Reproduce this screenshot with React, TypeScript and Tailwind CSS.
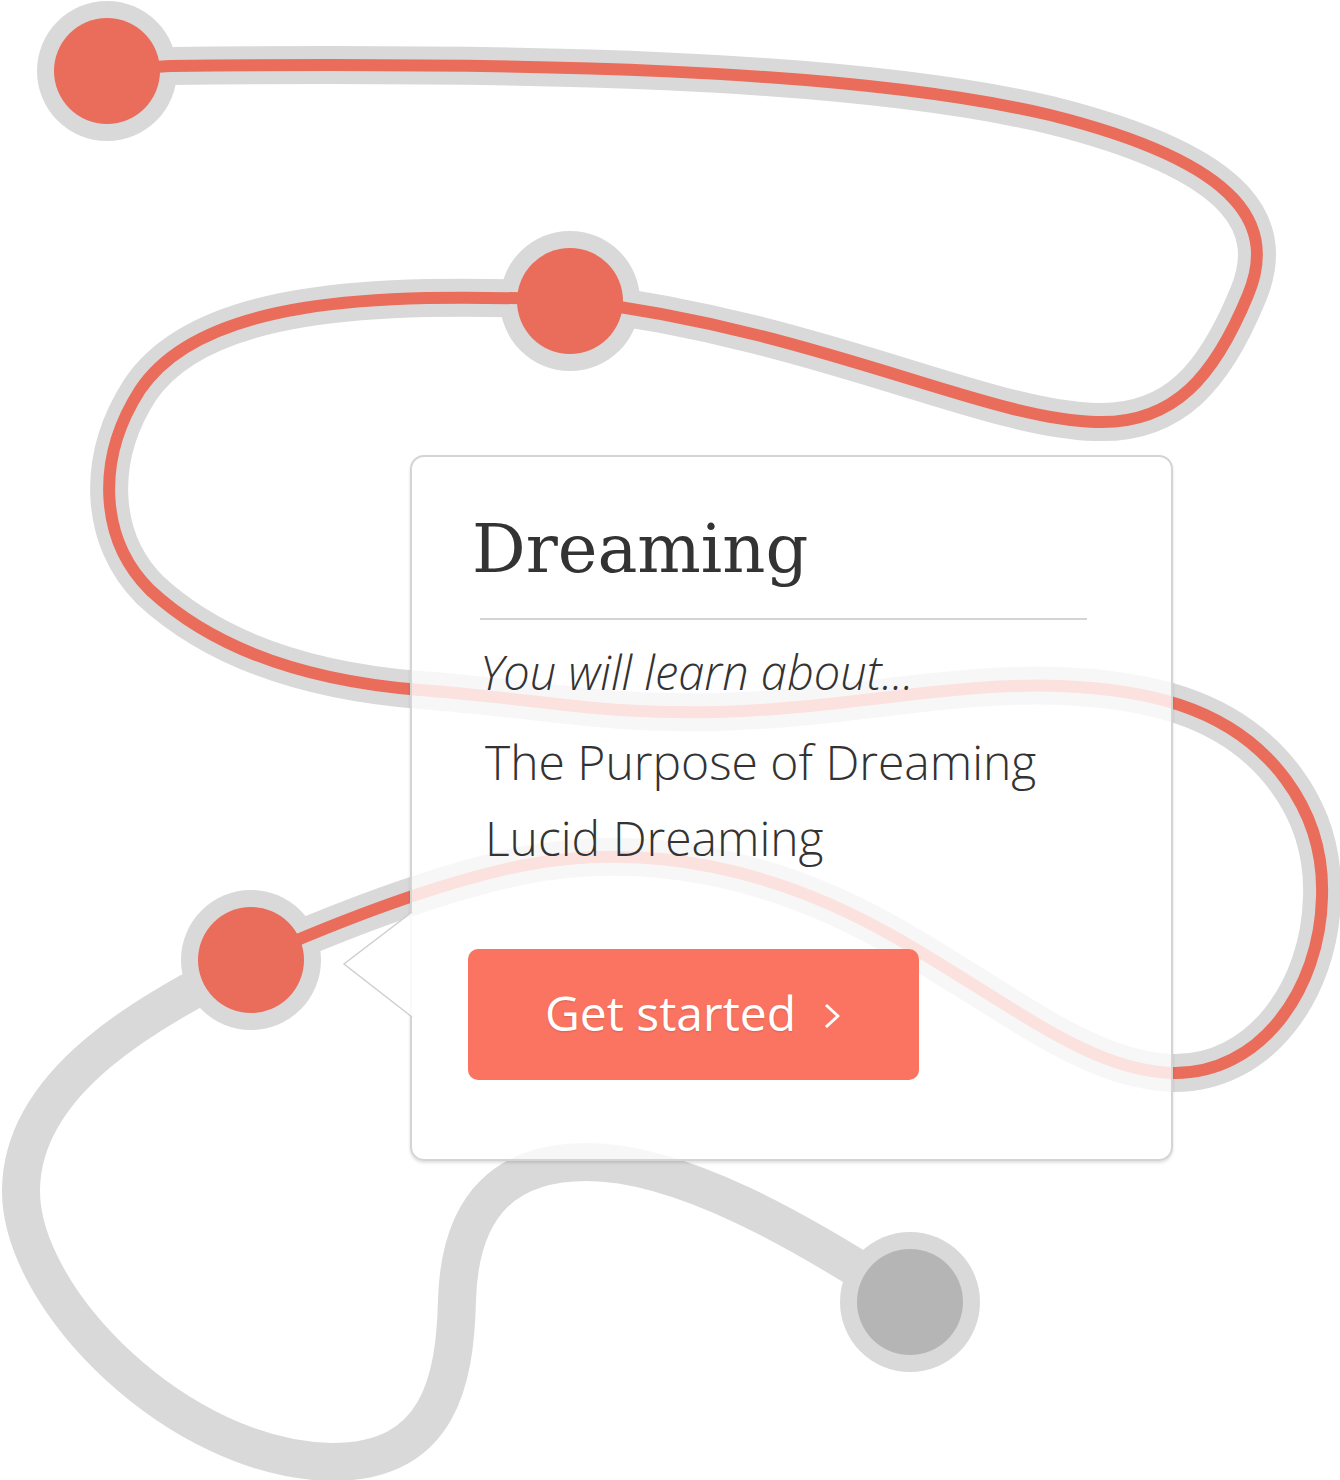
import React from "react";

const RED = "#EA6C5A";
const GRAY = "#D9D9D9";

// the travelled part of the route (red inside a grey casing)
const doneA =
  "M107,70 L170,66 C520,62 850,68 1050,115 C1250,165 1275,230 1248,295 C1215,375 1175,425 1095,422 C980,418 820,330 570,300";
const doneB =
  "M570,300 C370,292 200,300 140,390 C95,460 100,540 150,590 C220,655 320,682 420,690 C550,700 600,715 720,712 C850,708 950,682 1060,686 C1110,688 1150,695 1180,705 C1270,735 1325,810 1322,897 C1320,990 1260,1075 1172,1073 C1090,1070 1020,1010 900,940 C780,870 650,840 520,866 C430,885 330,925 251,960";
// what is still ahead (grey only)
const ahead =
  "M251,960 C150,1010 22,1080 21,1190 C20,1300 180,1460 332,1462 C440,1462 455,1380 457,1300 C460,1200 510,1162 587,1162 C680,1162 800,1230 910,1302";

const nodes = [
  { x: 107, y: 71, done: true },
  { x: 570, y: 301, done: true },
  { x: 251, y: 960, done: true },
  { x: 910, y: 1302, done: false },
];

function Route() {
  return (
    <svg className="absolute inset-0" width="1340" height="1480" viewBox="0 0 1340 1480">
      <g fill="none" strokeLinecap="round" strokeLinejoin="round">
        <path d={ahead} stroke={GRAY} strokeWidth="38" />
        <path d={doneA} stroke={GRAY} strokeWidth="38" />
        <path d={doneB} stroke={GRAY} strokeWidth="38" />
      </g>
      {nodes.map((n, i) => (
        <circle key={"ring" + i} cx={n.x} cy={n.y} r="70" fill={GRAY} />
      ))}
      <g fill="none" strokeLinecap="round">
        <path d={doneA} stroke={RED} strokeWidth="12" />
        <path d={doneB} stroke={RED} strokeWidth="12" />
      </g>
      {nodes.map((n, i) => (
        <circle key={"dot" + i} cx={n.x} cy={n.y} r="53" fill={n.done ? RED : "#B5B5B5"} />
      ))}
    </svg>
  );
}

function LessonCard() {
  return (
    <div className="absolute left-[410px] top-[455px] w-[763px] rounded-[14px] border-2 border-[#d4d4d4] bg-white/80 pl-[68px] pr-[84px] pt-[52px] pb-[79px] shadow-[0_2px_3px_rgba(0,0,0,0.12)]">
      {/* pointer towards the active node */}
      <svg className="absolute left-[-70px] top-[450px]" width="72" height="116" viewBox="0 0 72 116">
        <polygon points="70,5 2,57 70,110" fill="rgba(255,255,255,0.85)" />
        <polyline points="70,5 2,57 70,110" fill="none" stroke="#cfcfcf" strokeWidth="1.5" />
      </svg>

      <h2 className="-ml-[8px] text-[67px] leading-[80px] text-[#333] font-['DejaVu_Serif',serif]">Dreaming</h2>
      <div className="mt-[29px] h-[2px] bg-[#d4d4d4]" />

      <p className="mt-[22px] text-[47px] leading-[60px] font-light italic text-[#333] font-['Open_Sans',sans-serif]">
        You will learn about...
      </p>

      <ul className="mt-[22px] pl-[5px] text-[48px] leading-[76px] font-light text-[#333] font-['Open_Sans',sans-serif]">
        <li>The Purpose of Dreaming</li>
        <li>Lucid Dreaming</li>
      </ul>

      <button className="mt-[73px] -ml-[12px] flex h-[131px] w-[451px] items-center justify-center gap-[26px] rounded-[10px] bg-[#FA7461] text-[48px] leading-none text-white font-['Open_Sans',sans-serif] [text-shadow:0_1px_2px_rgba(0,0,0,0.15)]">
        <span className="-mt-[4px]">Get started</span>
        <svg width="20" height="28" viewBox="0 0 20 28" className="mt-[2px]">
          <polyline points="4,3 16,14 4,25" fill="none" stroke="white" strokeWidth="3" strokeLinejoin="round" />
        </svg>
      </button>
    </div>
  );
}

export default function App() {
  return (
    <div className="relative h-[1480px] w-[1340px] overflow-hidden bg-white">
      <Route />
      <LessonCard />
    </div>
  );
}
